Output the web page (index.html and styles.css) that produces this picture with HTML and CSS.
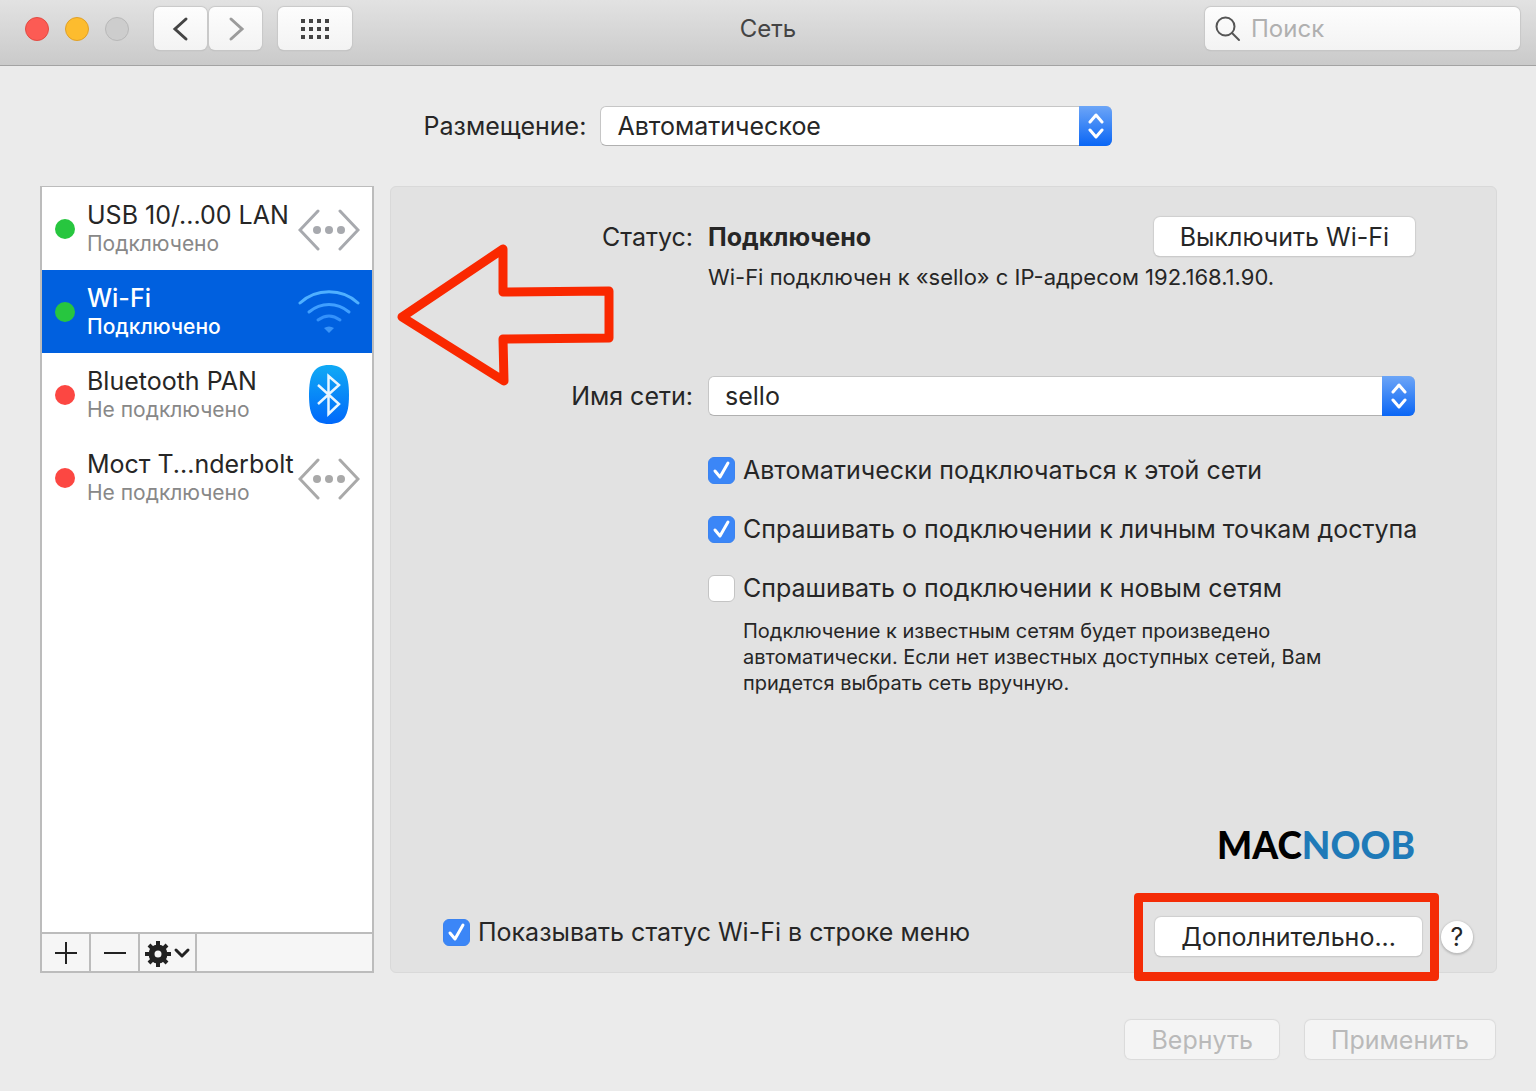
FILE: index.html
```html
<!DOCTYPE html>
<html lang="ru">
<head>
    <meta charset="UTF-8">
    <meta name="viewport" content="width=device-width, initial-scale=1.0">
    <title>Сеть</title>
    <link rel="stylesheet" href="styles.css">
</head>
<body>
    <header class="toolbar">
        <div class="toolbar-left">
            <div class="lights">
                <button class="light light-close" aria-label="Закрыть"></button>
                <button class="light light-min" aria-label="Свернуть"></button>
                <button class="light light-off" aria-label="Развернуть" disabled></button>
            </div>
            <div class="nav">
                <button class="tool-btn" aria-label="Назад">
                    <svg width="20" height="26" viewBox="0 0 20 26"><path d="M15 3 4 13l11 10" fill="none" stroke="#444" stroke-width="3" stroke-linecap="round" stroke-linejoin="miter"/></svg>
                </button>
                <button class="tool-btn" aria-label="Вперед">
                    <svg width="20" height="26" viewBox="0 0 20 26"><path d="M5 3l11 10L5 23" fill="none" stroke="#9b9b9b" stroke-width="3" stroke-linecap="round"/></svg>
                </button>
            </div>
            <button class="tool-btn tool-grid" aria-label="Показать все">
                <svg width="28" height="20" viewBox="0 0 28 20" fill="#444">
                    <path d="M0 0h4v4H0zM8 0h4v4H8zM16 0h4v4h-4zM24 0h4v4h-4zM0 8h4v4H0zM8 8h4v4H8zM16 8h4v4h-4zM24 8h4v4h-4zM0 16h4v4H0zM8 16h4v4H8zM16 16h4v4h-4zM24 16h4v4h-4z"/>
                </svg>
            </button>
        </div>
        <h1 class="title">Сеть</h1>
        <label class="search">
            <svg width="26" height="26" viewBox="0 0 26 26" fill="none" stroke="#555" stroke-width="2" stroke-linecap="round"><circle cx="10.500" cy="10.500" r="9"/><path d="M17 17l7 7"/></svg>
            <input type="search" placeholder="Поиск" aria-label="Поиск">
        </label>
    </header>

    <div class="location">
        <label for="location">Размещение:</label>
        <div class="select location-select">
            <select id="location">
                <option>Автоматическое</option>
            </select>
            <span class="cap"><svg width="16" height="26" viewBox="0 0 16 26" fill="none" stroke="#fff" stroke-width="3" stroke-linecap="round" stroke-linejoin="round"><path d="M2 9l6-7 6 7M2 17l6 7 6-7"/></svg></span>
        </div>
    </div>

    <main class="content">
        <aside class="sidebar">
            <ul class="services">
                <li class="service">
                    <span class="dot dot-on"></span>
                    <div class="service-text">
                        <div class="service-name">USB 10/...00 LAN</div>
                        <div class="service-status">Подключено</div>
                    </div>
                    <svg class="service-icon" width="62" height="60" viewBox="0 0 62 60"><g fill="none" stroke="#a7a9ae" stroke-width="3" stroke-linecap="round"><path d="M20 12 2 31l18 19M42 12l18 19-18 19"/></g><g fill="#a7a9ae"><circle cx="19" cy="31" r="4"/><circle cx="31" cy="31" r="4"/><circle cx="43" cy="31" r="4"/></g></svg>
                </li>
                <li class="service selected">
                    <span class="dot dot-on"></span>
                    <div class="service-text">
                        <div class="service-name">Wi-Fi</div>
                        <div class="service-status">Подключено</div>
                    </div>
                    <svg class="service-icon" width="62" height="60" viewBox="0 0 62 60"><g fill="none" stroke-width="3" stroke-linecap="round"><path stroke="#4fb0ff" d="M2 21c16-15 42-15 58 0"/><path stroke="#3f9fff" d="M11 30c12-10 28-10 40 0"/><path stroke="#3391fb" d="M20 38c7-5 15-5 22 0"/></g><path fill="#3a94f8" d="M26 46q5-3 10 0l-5 5z"/></svg>
                </li>
                <li class="service">
                    <span class="dot dot-off"></span>
                    <div class="service-text">
                        <div class="service-name">Bluetooth PAN</div>
                        <div class="service-status">Не подключено</div>
                    </div>
                    <svg class="service-icon" width="62" height="60" viewBox="0 0 62 60"><defs><linearGradient id="bt" x1="0" y1="0" x2="0" y2="1"><stop offset="0" stop-color="#10aaf5"/><stop offset="1" stop-color="#0068fa"/></linearGradient></defs><path fill="url(#bt)" d="M31 0C46 0 51 9 51 30S46 59 31 59 11 51 11 30 16 0 31 0z"/><path d="M20 20l21 19-10.500 10V11L41 20 20 39" fill="none" stroke="#e8f6ff" stroke-width="2.500"/></svg>
                </li>
                <li class="service">
                    <span class="dot dot-off"></span>
                    <div class="service-text">
                        <div class="service-name">Мост T...nderbolt</div>
                        <div class="service-status">Не подключено</div>
                    </div>
                    <svg class="service-icon" width="62" height="60" viewBox="0 0 62 60"><g fill="none" stroke="#a9a9a9" stroke-width="3" stroke-linecap="round"><path d="M20 12 2 31l18 19M42 12l18 19-18 19"/></g><g fill="#a9a9a9"><circle cx="19" cy="31" r="4"/><circle cx="31" cy="31" r="4"/><circle cx="43" cy="31" r="4"/></g></svg>
                </li>
            </ul>
            <div class="actions">
                <button class="action" aria-label="Добавить"><svg width="22" height="22" viewBox="0 0 22 22" stroke="#222" stroke-width="2"><path d="M0 11h22M11 0v22"/></svg></button>
                <button class="action" aria-label="Удалить"><svg width="22" height="22" viewBox="0 0 22 22" stroke="#222" stroke-width="2"><path d="M0 11h22"/></svg></button>
                <button class="action action-menu" aria-label="Действия">
                    <svg width="46" height="28" viewBox="0 0 46 28"><g transform="translate(13 15)"><circle r="6.500" fill="none" stroke="#222" stroke-width="6"/><path d="M0-13V-8M0 13V8M-13 0h5M13 0H8M-9-9l3 3M9 9 6 6M-9 9l3-3M9-9 6-6" stroke="#222" stroke-width="4"/></g><path d="M31 11l6 6 6-6" fill="none" stroke="#222" stroke-width="3" stroke-linecap="round" stroke-linejoin="round"/></svg>
                </button>
            </div>
        </aside>

        <section class="panel">
            <div class="form">
                <span class="form-label">Статус:</span>
                <div class="status-row">
                    <strong>Подключено</strong>
                    <button class="btn">Выключить Wi-Fi</button>
                </div>
                <p class="details">Wi-Fi подключен к «sello» с IP-адресом 192.168.1.90.</p>

                <label class="form-label" for="network">Имя сети:</label>
                <div class="select">
                    <select id="network">
                        <option>sello</option>
                    </select>
                    <span class="cap"><svg width="16" height="26" viewBox="0 0 16 26" fill="none" stroke="#fff" stroke-width="3" stroke-linecap="round" stroke-linejoin="round"><path d="M2 9l6-7 6 7M2 17l6 7 6-7"/></svg></span>
                </div>

                <div class="checks">
                    <label class="check"><input type="checkbox" checked>Автоматически подключаться к этой сети</label>
                    <label class="check"><input type="checkbox" checked>Спрашивать о подключении к личным точкам доступа</label>
                    <label class="check"><input type="checkbox">Спрашивать о подключении к новым сетям</label>
                    <p class="hint">Подключение к известным сетям будет произведено автоматически. Если нет известных доступных сетей, Вам придется выбрать сеть вручную.</p>
                </div>
            </div>

            <div class="brand">MAC<span>NOOB</span></div>

            <div class="panel-bottom">
                <label class="check"><input type="checkbox" checked>Показывать статус Wi-Fi в строке меню</label>
                <div class="advanced">
                    <button class="btn">Дополнительно...</button>
                    <span class="frame"></span>
                </div>
                <button class="help" aria-label="Справка">?</button>
            </div>

            <svg class="arrow" width="220" height="144" viewBox="0 0 220 144" fill="none" stroke="#fa2800" stroke-width="9" stroke-linejoin="round"><path d="M5 74 106 6V49L212 48V95L106 96 107 138z"/></svg>
        </section>
    </main>

    <footer class="footer">
        <button class="btn" disabled>Вернуть</button>
        <button class="btn" disabled>Применить</button>
    </footer>
</body>
</html>
```
FILE: styles.css
```css
* {
    box-sizing: border-box;
}
body {
    margin: 0;
    min-height: 100vh;
    display: flex;
    flex-direction: column;
    font-family: Inter, "Liberation Sans", sans-serif;
    font-size: 25px;
    line-height: 30px;
    color: #262626;
    background-color: #ebebeb;
}
button, input, select {
    font: inherit;
    color: inherit;
}
p, h1, ul {
    margin: 0;
    padding: 0;
}
button {
    padding: 0;
    border: none;
}
svg {
    display: block;
    flex: none;
}

/* toolbar */
.toolbar {
    display: grid;
    grid-template-columns: 1fr auto 1fr;
    align-items: center;
    height: 66px;
    padding: 0 16px 8px;
    background: linear-gradient(#e2e2e2, #cacaca);
    border-bottom: 1px solid #a3a3a3;
}
.toolbar-left {
    display: flex;
    align-items: center;
    padding-left: 9px;
}
.lights {
    display: flex;
    gap: 16px;
    margin-right: 25px;
}
.light {
    width: 24px;
    height: 24px;
    border-radius: 50%;
    border: 1px solid #b8b8b8;
}
.light-close {
    background-color: #fc5b54;
    border-color: #e24b42;
}
.light-min {
    background-color: #fdbc2e;
    border-color: #e0a028;
}
.light-off {
    background-color: #cdcdcd;
}
.nav {
    display: flex;
    gap: 2px;
    margin-right: 16px;
}
.tool-btn {
    display: flex;
    align-items: center;
    justify-content: center;
    width: 53px;
    height: 43px;
    border-radius: 6px;
    background: linear-gradient(#fdfdfd, #f3f3f3);
    box-shadow: 0 0 1px 1px #c8c8c8, 0 1px 1px #b0b0b0;
}
.tool-grid {
    width: 74px;
}
.title {
    font-size: 24px;
    font-weight: 400;
    color: #444;
}
.search {
    justify-self: end;
    display: flex;
    align-items: center;
    gap: 10px;
    width: 315px;
    height: 43px;
    padding: 0 10px;
    border-radius: 6px;
    background: linear-gradient(#fdfdfd, #f3f3f3);
    box-shadow: 0 0 1px 1px #c8c8c8, 0 1px 1px #b0b0b0;
}
.search input {
    flex: 1;
    min-width: 0;
    padding: 0;
    border: none;
    outline: none;
    background: none;
    font-size: 24px;
}
.search input::placeholder {
    color: #b0b0b0;
}

/* selects */
.location {
    display: flex;
    align-items: center;
    justify-content: center;
    gap: 14px;
    padding: 40px;
}
.location-select {
    width: 512px;
}
.select {
    position: relative;
    height: 40px;
}
.select select {
    appearance: none;
    width: 100%;
    height: 40px;
    padding: 0 40px 0 16px;
    border: 1px solid #c6c6c6;
    border-bottom-color: #b0b0b0;
    border-radius: 6px;
    background-color: #fff;
}
.cap {
    position: absolute;
    top: 0;
    right: 0;
    bottom: 0;
    width: 33px;
    display: flex;
    align-items: center;
    justify-content: center;
    border-radius: 0 6px 6px 0;
    background: linear-gradient(#6ca5f7, #0a66f5);
    pointer-events: none;
}

/* content */
.content {
    flex: 1;
    display: flex;
    gap: 16px;
    padding: 0 39px 0 40px;
}
.sidebar {
    display: flex;
    flex-direction: column;
    width: 334px;
    flex: none;
    border: 2px solid #bcbcbc;
    border-top-width: 1px;
    background-color: #fff;
}
.services {
    flex: 1;
    list-style: none;
}
.service {
    display: flex;
    align-items: center;
    height: 83px;
    padding: 0 12px 0 13px;
}
.selected {
    color: #fff;
    background-color: #0060df;
}
.dot {
    flex: none;
    width: 20px;
    height: 20px;
    margin-right: 12px;
    border-radius: 50%;
}
.dot-on {
    background-color: #27c63f;
}
.dot-off {
    background-color: #fc4742;
}
.service-text {
    flex: 1;
    min-width: 0;
    white-space: nowrap;
}
.service-status {
    font-size: 21px;
    line-height: 28px;
    color: #888;
}
.selected .service-status {
    color: #fff;
}
.selected .service-text {
    font-weight: 500;
}
.actions {
    display: flex;
    height: 39px;
    border-top: 2px solid #bcbcbc;
    background-color: #f6f6f6;
}
.action {
    display: flex;
    align-items: center;
    justify-content: center;
    width: 49px;
    border-right: 2px solid #bcbcbc;
    background: none;
}
.action-menu {
    width: 57px;
}

/* panel */
.panel {
    position: relative;
    flex: 1;
    min-width: 0;
    display: flex;
    flex-direction: column;
    padding: 30px 23px 16px 52px;
    border: 1px solid #d9d9d9;
    border-radius: 6px;
    background-color: #e2e2e2;
}
.form {
    display: grid;
    grid-template-columns: 250px minmax(0, 1fr);
    column-gap: 15px;
    align-items: center;
    padding-right: 58px;
}
.form-label {
    text-align: right;
}
.status-row {
    display: flex;
    align-items: center;
    justify-content: space-between;
}
.btn {
    height: 39px;
    padding: 0 26px;
    border-radius: 6px;
    background-color: #fff;
    box-shadow: 0 0 1px 1px #cfcfcf, 0 1px 1px #a8a8a8;
}
.btn:disabled {
    color: #b9b9b9;
    background-color: #f4f4f4;
    box-shadow: 0 0 1px 1px #dadada;
}
.details {
    grid-column: 2;
    margin: 7px 0 85px;
    font-size: 22px;
    line-height: 28px;
}
.checks {
    grid-column: 2;
    margin-top: 39px;
}
.check {
    display: flex;
    align-items: center;
    gap: 8px;
    height: 30px;
    white-space: nowrap;
}
.checks .check {
    margin-bottom: 29px;
}
.check input {
    appearance: none;
    flex: none;
    width: 27px;
    height: 27px;
    margin: 0;
    border: 1px solid #c4c4c4;
    border-radius: 6px;
    background-color: #fff;
}
.check input:checked {
    border-color: #3b83f0;
    background: #3b86f7 url("data:image/svg+xml,%3Csvg xmlns='http://www.w3.org/2000/svg' viewBox='0 0 25 25'%3E%3Cpath d='M6 13l5 6 8-14' fill='none' stroke='white' stroke-width='3' stroke-linecap='round' stroke-linejoin='round'/%3E%3C/svg%3E") center no-repeat;
}
.checks .hint {
    max-width: 640px;
    margin-top: -14px;
    padding-left: 35px;
    font-size: 20px;
    line-height: 26px;
}
.brand {
    margin: auto 58px 50px 0;
    text-align: right;
    font-family: Lato, sans-serif;
    font-size: 37px;
    font-weight: 900;
    line-height: 44px;
    color: #000;
}
.brand span {
    color: #1f7ab8;
}
.panel-bottom {
    display: flex;
    align-items: center;
}
.panel-bottom .check {
    align-self: flex-start;
}
.advanced {
    position: relative;
    margin-left: auto;
}
.frame {
    position: absolute;
    inset: -24px -17px -25px -21px;
    border: 9px solid #f42c06;
    border-radius: 4px;
    pointer-events: none;
}
.help {
    width: 32px;
    height: 32px;
    margin-left: 19px;
    border-radius: 50%;
    background-color: #fff;
    box-shadow: 0 1px 2px 1px #bdbdbd;
}
.arrow {
    position: absolute;
    left: 6px;
    top: 56px;
    pointer-events: none;
}

.footer {
    display: flex;
    justify-content: flex-end;
    gap: 26px;
    padding: 47px 41px 32px;
}
```
